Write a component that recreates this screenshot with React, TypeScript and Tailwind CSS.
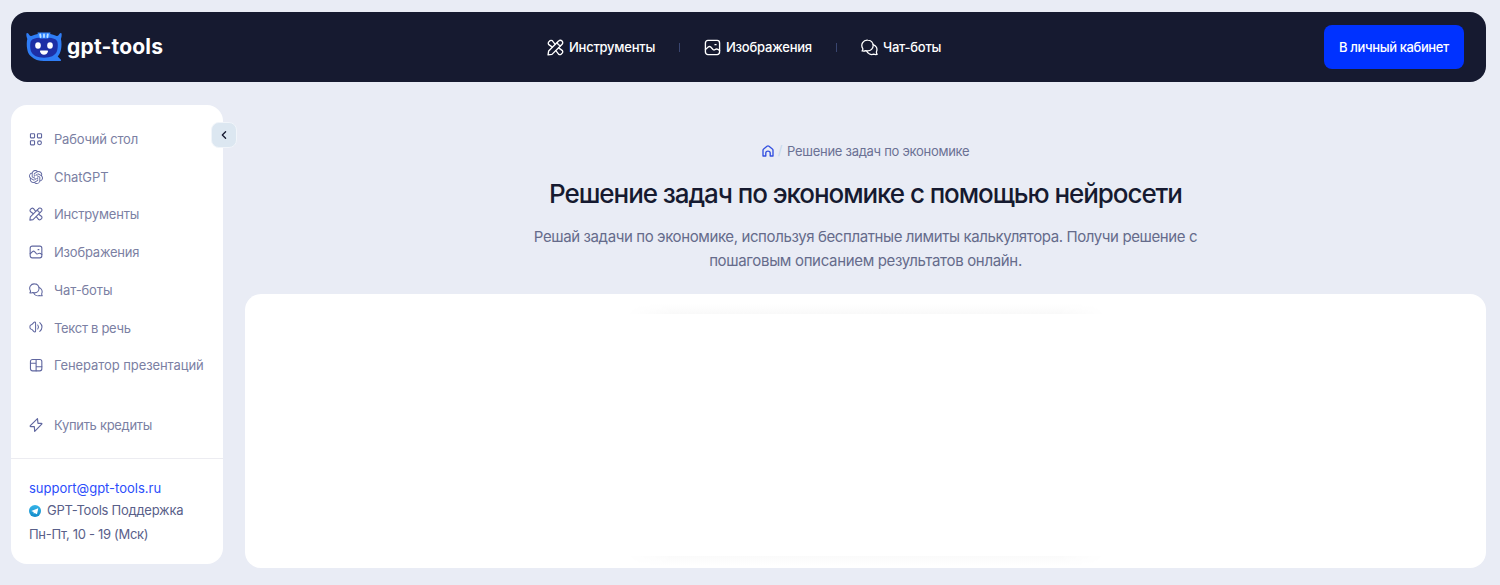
import type { ReactNode } from 'react';
import { SiOpenai } from 'react-icons/si';
import clsx from 'clsx';

type IconProps = { className?: string };

function Stroke({ className, children, width = 1.5 }: IconProps & { children: ReactNode; width?: number }) {
  return (
    <svg
      viewBox="0 0 24 24"
      fill="none"
      stroke="currentColor"
      strokeWidth={width}
      strokeLinecap="round"
      strokeLinejoin="round"
      className={clsx('shrink-0', className)}
    >
      {children}
    </svg>
  );
}

function ToolsIcon({ className }: IconProps) {
  return (
    <Stroke className={className} width={1.9}>
      <path d="M7.500 11.500 2.200 7.600a3.200 3.200 0 0 1 0-3.200l2-2a3.200 3.200 0 0 1 3.200 0L11.500 7.500" />
      <path d="m16.500 12.500 5.300 3.900a3.200 3.200 0 0 1 0 3.200l-2 2a3.200 3.200 0 0 1-3.200 0L12.500 16.500" />
      <path d="m1.500 22.500.8-5.500L16 3.300C17.300 1.600 19.500 1 21.200 2.800s1.200 3.900-.5 5.200L7 21.700Z" />
      <path d="M14.500 5c.5 2.500 2 4 4.500 4.500" />
    </Stroke>
  );
}

function ImageIcon({ className }: IconProps) {
  return (
    <Stroke className={className} width={1.9}>
      <rect x="2" y="2" width="20" height="20" rx="3.500" />
      <path d="m2 15 4-3.700c1.200-1 2.400-1 3.500.1l3.200 3.300c1 .9 2 .9 3.100.1 1.800-1.300 3.300-1.100 6.200 1.500" />
      <path d="M15.500 8h1.500" />
    </Stroke>
  );
}

function ChatsIcon({ className }: IconProps) {
  return (
    <Stroke className={className} width={1.8}>
      <path d="M9.500 1.500a7.700 7.700 0 0 1 0 15.400c-1 0-2-.2-2.900-.5-1 .6-2.900.8-5.100.5 1-1.200 1.400-2.400.9-3.600A7.700 7.700 0 0 1 9.500 1.500Z" />
      <path d="M17.200 7.800a7.400 7.400 0 0 1 4.700 10c-.4 1.200-.1 2.500.8 4-2 .3-3.600.1-4.800-.4A7.700 7.700 0 0 1 8 17" />
    </Stroke>
  );
}

function DashboardIcon({ className }: IconProps) {
  return (
    <Stroke className={className} width={1.9}>
      <rect x="2.500" y="3" width="7" height="7" rx="1" />
      <rect x="14.500" y="3" width="7" height="7" rx="1" />
      <rect x="2.500" y="15" width="7" height="7" rx="1" />
      <circle cx="18" cy="18.5" r="3.300" />
    </Stroke>
  );
}

function SpeakerIcon({ className }: IconProps) {
  return (
    <Stroke className={className} width={1.8}>
      <path d="M1.500 12c0-2.500.6-3.700 2.500-4 1.500-.2 2.900-2.300 4-3.500 1.500-1.600 3.300-1.500 3.300 1v13c0 2.500-1.800 2.600-3.300 1-1.100-1.200-2.500-3.300-4-3.500-1.900-.3-2.500-1.500-2.500-4Z" />
      <path d="M15 8.500c1.500 2 1.500 5 0 7M18.500 4.500c5 4.500 5 10.500 0 15" />
    </Stroke>
  );
}

function LayoutIcon({ className }: IconProps) {
  return (
    <Stroke className={className} width={1.9}>
      <rect x="2.500" y="2.500" width="19.500" height="19.500" rx="3.500" />
      <path d="M12.200 2.500V22M2.500 9h9.700M12.200 15h9.800" />
    </Stroke>
  );
}

function BoltIcon({ className }: IconProps) {
  return (
    <Stroke className={className} width={2}>
      <path d="M14.500 1 2.300 13.200c-.6.8-.3 1.600.6 1.600h6.200l.7 8.200L21.800 10.600c.6-.8.300-1.500-.6-1.500h-5.800Z" />
    </Stroke>
  );
}

function HomeIcon({ className }: IconProps) {
  return (
    <Stroke className={className} width={2.700}>
      <path d="M2 22V10.500c0-1.200.4-1.900 1.300-2.600l6.700-5.400c1.400-1.100 2.600-1.100 4 0l6.700 5.400c.9.7 1.300 1.400 1.300 2.600V22h-5.600v-6c0-5-8.800-5-8.800 0v6Z" />
    </Stroke>
  );
}

function TelegramIcon({ className }: IconProps) {
  return (
    <svg viewBox="0 0 24 24" className={clsx('shrink-0', className)}>
      <defs>
        <linearGradient id="tg" x1="0" y1="0" x2="0" y2="1">
          <stop offset="0" stopColor="#35b4e8" />
          <stop offset="1" stopColor="#128bc9" />
        </linearGradient>
      </defs>
      <circle cx="12" cy="12" r="12" fill="url(#tg)" />
      <path d="m4.500 11.800 12.700-5c.8-.3 1.300.1 1.100 1.100l-2.100 9.700c-.2.8-.8 1-1.500.5l-3.200-2.300-1.900 1.700-.5-3.400Z" fill="#fff" />
    </svg>
  );
}

function Mascot({ className }: IconProps) {
  return (
    <svg viewBox="0 0 36 30" className={clsx('shrink-0', className)}>
      <path
        d="M.4 1.500C.6.600 1.900.700 2.500 1.700l1 1.600c.6.700 1.500.7 2.500.4C9.500 2 13.500 1.500 18 1.500s8.500.5 12 2.200c1 .3 1.900.3 2.500-.4l1-1.600c.6-1 1.900-1.100 2.100-.2.3 2-.2 4-.7 5.500.8 3 .8 7.500.1 10.500-.6 3-1.700 5.100-3.300 6.900l3 3.100c.7.8.4 1.500-.7 1.500H18c-5.500 0-9.500-1.500-12.800-4.500C2.800 22.500 1.600 20 1.200 17 .6 13.500.6 10 1.300 7 .8 5.500.1 3.500.4 1.500Z"
        fill="#2f7df5"
      />
      <path
        d="M18 5.500c8 0 12 1.200 13.200 3.800 1 2.600.7 8-.6 10.800-1.600 3.500-6 5.700-12.600 5.700s-11-2.200-12.600-5.700c-1.300-2.800-1.600-8.200-.6-10.800C6 6.700 10 5.500 18 5.500Z"
        fill="#1d2fa5"
      />
      <path d="M11.500.5h13l-.8 4c-.4 1.600-1.500 2-2.700 2h-6c-1.200 0-2.300-.4-2.700-2Z" fill="#3284fb" />
      <path d="M14.200 2.500 14.600 5M18 2.500V5M21.800 2.500 21.400 5" stroke="#bde0ff" strokeWidth="1.800" strokeLinecap="round" />
      <ellipse cx="12" cy="13.500" rx="2.800" ry="3.300" fill="#fff" />
      <ellipse cx="24" cy="13.500" rx="2.800" ry="3.300" fill="#fff" />
      <path d="M15 18.500h6c.8 0 1.200.5.9 1.300C21.200 21.700 20 22.700 18 22.700s-3.200-1-3.900-2.900c-.3-.8.100-1.300.9-1.300Z" fill="#fff" />
    </svg>
  );
}

const topNav = [
  { label: 'Инструменты', icon: ToolsIcon, width: 'w-[108px]' },
  { label: 'Изображения', icon: ImageIcon, width: 'w-[108px]' },
  { label: 'Чат-боты', icon: ChatsIcon, width: 'w-[82px]' },
];

const sideNav = [
  { label: 'Рабочий стол', icon: DashboardIcon, tracking: 'tracking-[-0.2px]' },
  { label: 'ChatGPT', icon: SiOpenai, tracking: 'tracking-[-0.1px]' },
  { label: 'Инструменты', icon: ToolsIcon, tracking: 'tracking-[-0.2px]' },
  { label: 'Изображения', icon: ImageIcon, tracking: 'tracking-[-0.2px]' },
  { label: 'Чат-боты', icon: ChatsIcon, tracking: 'tracking-[-0.1px]' },
  { label: 'Текст в речь', icon: SpeakerIcon, tracking: 'tracking-[-0.3px]' },
  { label: 'Генератор презентаций', icon: LayoutIcon, tracking: 'tracking-[-0.08px]' },
];

function Header() {
  return (
    <header className="flex h-[70px] items-center justify-between rounded-2xl bg-[#161a30] pr-[22px] pl-[15px] text-white">
      <a href="#" className="flex w-[200px] items-center gap-[5px]">
        <Mascot className="h-[30px] w-[36px]" />
        <span className="text-[21px] leading-[24px] font-bold tracking-[0.2px]">gpt-tools</span>
      </a>
      <nav className="flex items-center pt-px text-[13px] font-medium tracking-[-0.25px]">
        {topNav.map((item, i) => (
          <div key={item.label} className="flex items-center">
            {i > 0 && <span className="mx-[24px] h-[9px] w-px bg-[#39456f]" />}
            <a href="#" className={clsx('flex items-center gap-[5px] whitespace-nowrap', item.width)}>
              <item.icon className="size-[17px]" />
              {item.label}
            </a>
          </div>
        ))}
      </nav>
      <div className="flex w-[200px] justify-end">
        <button className="h-[44px] w-[140px] rounded-lg bg-[#0032ff] pt-0.5 text-[13px] font-medium tracking-[-0.38px] whitespace-nowrap">
          В личный кабинет
        </button>
      </div>
    </header>
  );
}

function Sidebar() {
  return (
    <aside className="relative h-[458.5px] w-[212px] shrink-0 rounded-2xl bg-white text-[13px] text-[#7b80a3]">
      <button className="absolute top-[17px] right-[-14px] flex size-[26px] items-center justify-center rounded-lg border border-[#f1f5fa] bg-[#dce7f1] text-[#161a30]">
        <Stroke className="size-[13px]" width={2.500}>
          <path d="m14 5-6 6 6 6" />
        </Stroke>
      </button>
      <nav className="flex flex-col pt-[15px] pl-[18px]">
        {sideNav.map((item) => (
          <a key={item.label} href="#" className="flex h-[37.7px] items-center gap-[11px] whitespace-nowrap">
            <item.icon className="size-[14px] text-[#6067a0]" />
            <span className={clsx('pt-0.5', item.tracking)}>{item.label}</span>
          </a>
        ))}
        <a href="#" className="mt-[22px] flex h-[37.7px] items-center gap-[11px]">
          <BoltIcon className="size-[14px] text-[#6067a0]" />
          <span className="pt-0.5 tracking-[-0.3px]">Купить кредиты</span>
        </a>
      </nav>
      <div className="mt-[14px] flex flex-col border-t border-[#ececf1] pt-[18px] pl-[18px] text-[#596089]">
        <a href="#" className="h-[23px] leading-[23px] text-[#2b4dfb]">
          support@gpt-tools.ru
        </a>
        <a href="#" className="flex h-[22px] items-center gap-[6px] tracking-[-0.25px] whitespace-nowrap">
          <TelegramIcon className="size-[12px]" />
          GPT-Tools Поддержка
        </a>
        <span className="h-[25px] leading-[25px] tracking-[-0.3px]">Пн-Пт, 10 - 19 (Мск)</span>
      </div>
    </aside>
  );
}

export default function App() {
  return (
    <div className="h-[585px] overflow-hidden bg-[#e9ecf5] pt-[12px] pr-[14px] pl-[11px] font-[Inter,sans-serif]">
      <Header />
      <div className="mt-[23px] flex gap-[22px]">
        <Sidebar />
        <main className="flex flex-1 flex-col items-center">
          <div className="mt-[36px] flex h-[20px] items-center text-[13px] tracking-[-0.28px] text-[#6b7194]">
            <HomeIcon className="size-[12px] text-[#3350e0]" />
            <span className="mr-[5px] ml-[4px] text-[#c6d8ec]">/</span>
            <span className="pt-0.5">Решение задач по экономике</span>
          </div>
          <h1 className="mt-[15px] h-[36px] text-[26px] leading-[36px] font-medium tracking-[-1.07px] whitespace-nowrap text-[#161a30]">
            Решение задач по экономике с помощью нейросети
          </h1>
          <p className="mt-[12.5px] text-center text-[15px] leading-[24px] tracking-[-0.39px] whitespace-nowrap text-[#656b8b]">
            Решай задачи по экономике, используя бесплатные лимиты калькулятора. Получи решение с
            <br />
            <span className="tracking-[-0.33px]">пошаговым описанием результатов онлайн.</span>
          </p>
          <section className="mt-[21.5px] flex h-[274px] w-full flex-col items-center justify-between rounded-2xl bg-white pt-[10px] pb-[3px]">
            <div className="h-[10px] w-[480px] bg-linear-to-b from-white to-[#f9f9f9] mask-x-from-90% mask-x-to-100%" />
            <div className="h-[9px] w-[480px] bg-linear-to-b from-[#fafafa] to-white mask-x-from-90% mask-x-to-100%" />
          </section>
        </main>
      </div>
    </div>
  );
}
